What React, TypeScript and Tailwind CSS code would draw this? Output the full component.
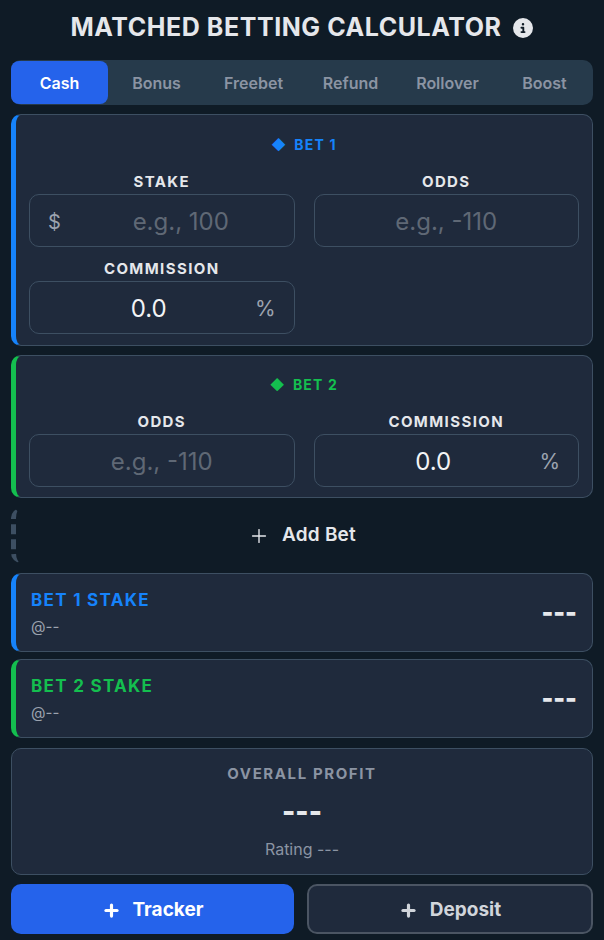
import { Plus } from "lucide-react"
import { FaCircleInfo } from "react-icons/fa6"

const tabs = ["Cash", "Bonus", "Freebet", "Refund", "Rollover", "Boost"]

function Field({ label, placeholder, value, prefix, suffix }: { label: string; placeholder?: string; value?: string; prefix?: string; suffix?: string }) {
  return (
    <div className="flex flex-col">
      <div className="mb-[3px] h-[18px] text-center text-[15px] leading-[18px] font-bold tracking-[1.4px] text-[#e5e7eb]">{label}</div>
      <div className={`relative flex h-[53px] items-center justify-center rounded-[10px] border border-[#3d4f62] pt-[2px] text-[24px] ${prefix ? "pl-[38px]" : ""} ${suffix ? "pr-[26px]" : ""}`}>
        {prefix && <span className="absolute left-[18px] text-[20px] text-[#9ca3af]">{prefix}</span>}
        {value ? <span className="text-[#f3f4f6]">{value}</span> : <span className="text-[#5f6875]">{placeholder}</span>}
        {suffix && <span className="absolute right-[18px] text-[21px] text-[#9ca3af]">{suffix}</span>}
      </div>
    </div>
  )
}

function BetHeader({ color, label }: { color: string; label: string }) {
  return (
    <div className={`flex items-center justify-center gap-[7px] text-[14px] leading-[18px] font-bold tracking-[1.2px] ${color}`}>
      <span className="text-[14px]">◆</span>
      <span>{label}</span>
    </div>
  )
}

function ResultRow({ label, color, border }: { label: string; color: string; border: string }) {
  return (
    <div className={`flex h-[79px] items-center justify-between rounded-[10px] border border-l-[5px] border-[#3d4f62] bg-[#1f2a3c] pr-[15px] pl-[15px] ${border}`}>
      <div>
        <div className={`text-[17px] leading-[22px] font-bold tracking-[1.3px] ${color}`}>{label}</div>
        <div className="mt-[7px] text-[15px] leading-[18px] text-[#9ca3af]">@--</div>
      </div>
      <div className="text-[25px] font-black text-[#e5e7eb]">---</div>
    </div>
  )
}

export default function App() {
  return (
    <div className="h-[940px] w-[604px] overflow-hidden bg-[#0f1b26] px-[11px] font-['Inter','Liberation_Sans',sans-serif]">
      <div className="flex h-[60px] items-center justify-center gap-[12px] pb-[4px]">
        <h1 className="text-[25px] font-bold tracking-[0.55px] text-[#e5e7eb]">MATCHED BETTING CALCULATOR</h1>
        <FaCircleInfo className="h-[20px] w-[20px] text-[#e5e7eb]" />
      </div>

      <div className="grid h-[45px] grid-cols-6 items-center rounded-[10px] bg-[#263a4b] text-center text-[16px] font-semibold text-[#8b94a3]">
        {tabs.map((tab, i) => (
          <div key={tab} className={i === 0 ? "flex h-[43px] items-center justify-center rounded-[8px] bg-[#2563eb] text-white" : ""}>
            {tab}
          </div>
        ))}
      </div>

      <div className="mt-[9px] h-[232px] rounded-[10px] border border-l-[5px] border-[#3d4f62] border-l-[#1683fb] bg-[#1f2a3c] pt-[21px] pr-[13px] pl-[13px]">
        <BetHeader color="text-[#1683fb]" label="BET 1" />
        <div className="mt-[19px] grid grid-cols-2 gap-x-[19px] gap-y-[13px]">
          <Field label="STAKE" placeholder="e.g., 100" prefix="$" />
          <Field label="ODDS" placeholder="e.g., -110" />
          <Field label="COMMISSION" value="0.0" suffix="%" />
        </div>
      </div>

      <div className="mt-[9px] h-[143px] rounded-[10px] border border-l-[5px] border-[#3d4f62] border-l-[#14bf4f] bg-[#1f2a3c] pt-[20px] pr-[13px] pl-[13px]">
        <BetHeader color="text-[#14bf4f]" label="BET 2" />
        <div className="mt-[19px] grid grid-cols-2 gap-x-[19px]">
          <Field label="ODDS" placeholder="e.g., -110" />
          <Field label="COMMISSION" value="0.0" suffix="%" />
        </div>
      </div>

      <div className="mt-[10px] flex h-[55px] items-center justify-center gap-[12px] rounded-l-[10px] border-l-[5px] border-dashed border-[#3d4f62] pr-[5px] text-[19px] font-semibold tracking-[0.2px] text-[#e5e7eb]">
        <Plus className="h-[22px] w-[22px]" strokeWidth={1.5} />
        <span>Add Bet</span>
      </div>

      <div className="mt-[10px] flex flex-col gap-[7px]">
        <ResultRow label="BET 1 STAKE" color="text-[#1683fb]" border="border-l-[#1683fb]" />
        <ResultRow label="BET 2 STAKE" color="text-[#14bf4f]" border="border-l-[#14bf4f]" />
      </div>

      <div className="mt-[10px] flex h-[127px] flex-col items-center rounded-[10px] border border-[#3d4f62] bg-[#1f2a3c] pt-[16px]">
        <div className="text-[15px] leading-[18px] font-bold tracking-[1.6px] text-[#8b94a3]">OVERALL PROFIT</div>
        <div className="mt-[10px] text-[28px] leading-[36px] font-black text-[#e5e7eb]">---</div>
        <div className="mt-[11px] text-[16px] leading-[18px] text-[#8b94a3]">Rating ---</div>
      </div>

      <div className="mt-[9px] grid h-[50px] grid-cols-[283px_286px] gap-[13px] text-[19px] font-bold">
        <button className="flex items-center justify-center gap-[12px] rounded-[10px] bg-[#2563eb] pt-[2px] text-white">
          <Plus className="h-[19px] w-[19px]" strokeWidth={4} />
          Tracker
        </button>
        <button className="flex items-center justify-center gap-[12px] rounded-[10px] border-2 border-[#4b5563] bg-[#1f2a3c] pt-[2px] text-[#d1d5db]">
          <Plus className="h-[19px] w-[19px]" strokeWidth={4} />
          Deposit
        </button>
      </div>
    </div>
  )
}
